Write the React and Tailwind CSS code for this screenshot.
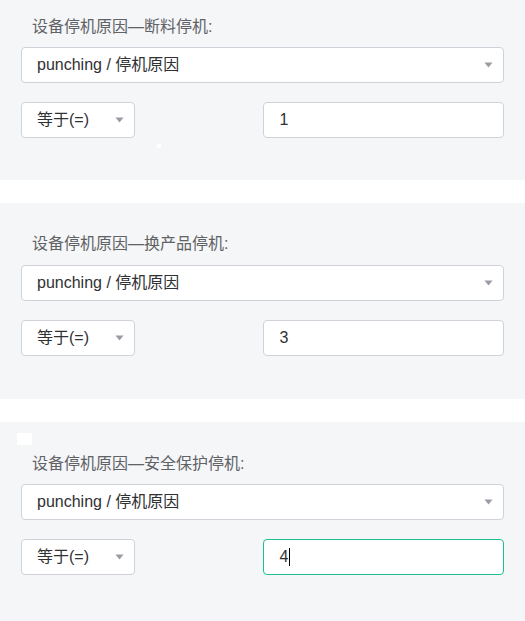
import React from "react";

const font = { fontFamily: '"Liberation Sans", "Noto Sans CJK SC", sans-serif' };

function Caret() {
    return (
        <svg width="9" height="6" viewBox="0 0 9 6" className="shrink-0">
            <path d="M0.5 0.5 H8.5 L4.5 5.5 Z" fill="#9a9ca3" />
        </svg>
    );
}

function Block({ title, value, focused, pad, gap, marker, pip }) {
    return (
        <section className={`relative bg-[#f5f6f8] px-[21px] ${pad}`}>
            {marker && <div className="absolute left-[17px] top-[11px] h-[12px] w-[15px] bg-white" />}
            {pip && <div className="absolute left-[157px] top-[144px] h-[4px] w-[4px] bg-white" />}
            <div className={`pl-[11px] text-[16px] leading-[20px] text-[#606266] ${gap}`}>{title}</div>
            <div className="flex h-[36px] items-center justify-between rounded-[4px] border border-[#cfd2d8] bg-white pl-[15px] pr-[10px] text-[16px] text-[#303133]">
                <span>punching / 停机原因</span>
                <Caret />
            </div>
            <div className="mt-[19px] grid grid-cols-2">
                <div className="flex h-[36px] w-[114px] items-center justify-between rounded-[4px] border border-[#cfd2d8] bg-white pl-[15px] pr-[10px] text-[16px] text-[#303133]">
                    <span>等于(=)</span>
                    <Caret />
                </div>
                <div
                    className={`flex h-[36px] items-center rounded-[4px] border bg-white pl-[16px] text-[16px] text-[#303133] ${
                        focused ? "border-[#1dbf8e]" : "border-[#cfd2d8]"
                    }`}
                >
                    <span>{value}</span>
                    {focused && <span className="ml-[1px] h-[18px] w-px bg-black" />}
                </div>
            </div>
        </section>
    );
}

export default function App() {
    return (
        <div className="h-[621px] w-[525px] overflow-hidden bg-white" style={font}>
            <Block title="设备停机原因—断料停机:" value="1" pad="pt-[17px] pb-[42px]" gap="mb-[10px]" pip />
            <div className="h-[23px]" />
            <Block title="设备停机原因—换产品停机:" value="3" pad="pt-[31px] pb-[43px]" gap="mb-[11px]" />
            <div className="h-[23px]" />
            <Block title="设备停机原因—安全保护停机:" value="4" pad="pt-[32px] pb-[46px]" gap="mb-[10px]" focused marker />
        </div>
    );
}
